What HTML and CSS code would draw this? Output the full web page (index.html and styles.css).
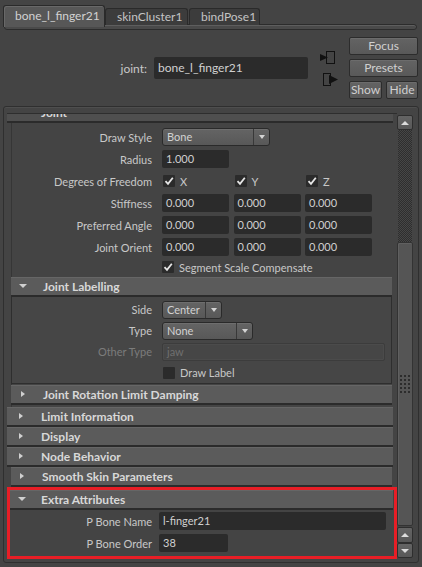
FILE: index.html
```html
<!DOCTYPE html>
<html>
<head>
<meta charset="utf-8">
<link rel="stylesheet" href="styles.css">
</head>
<body>
<div class="tabbar">
  <div class="tab active t1">bone_l_finger21</div>
  <div class="tab t2">skinCluster1</div>
  <div class="tab t3">bindPose1</div>
</div>
<div class="tabstrip"></div>

<div class="nodebar">
  <span class="nodelabel">joint:</span>
  <div class="nodefield">bone_l_finger21</div>
  <div class="conn">
    <svg width="19" height="35" viewBox="0 0 19 35">
      <rect x="7.5" y="0.5" width="8" height="12" fill="none" stroke="#111" stroke-width="1"/>
      <polygon points="1,3 9,6.5 1,10" fill="#111"/>
      <rect x="4.5" y="22.5" width="7" height="12" fill="none" stroke="#111" stroke-width="1"/>
      <polygon points="10,24 19,28.5 10,33" fill="#111"/>
    </svg>
  </div>
  <div class="btns">
    <div class="btn wide">Focus</div>
    <div class="btn wide">Presets</div>
    <div class="btn">Show</div>
    <div class="btn">Hide</div>
  </div>
</div>

<div class="scrollpanel">
  <div class="viewport">
    <div class="fhead top cut"><span class="ticon"><i class="tri down"></i></span><span class="t">Joint</span></div>
    <div class="fbody joint">
      <div class="row">
        <span class="lbl">Draw Style</span>
        <div class="ctl"><div class="dd w108"><span class="v">Bone</span><span class="a"></span></div></div>
      </div>
      <div class="row">
        <span class="lbl">Radius</span>
        <div class="ctl"><div class="fld w67">1.000</div></div>
      </div>
      <div class="row">
        <span class="lbl">Degrees of Freedom</span>
        <div class="ctl">
          <div class="cbg"><span class="cb on"><svg width="12" height="12" viewBox="0 0 12 12"><polyline points="2.5,6.2 5,8.8 9.8,2.8" fill="none" stroke="#e6e6e6" stroke-width="1.8"/></svg></span><span class="cbl">X</span></div>
          <div class="cbg"><span class="cb on"><svg width="12" height="12" viewBox="0 0 12 12"><polyline points="2.5,6.2 5,8.8 9.8,2.8" fill="none" stroke="#e6e6e6" stroke-width="1.8"/></svg></span><span class="cbl">Y</span></div>
          <div class="cbg"><span class="cb on"><svg width="12" height="12" viewBox="0 0 12 12"><polyline points="2.5,6.2 5,8.8 9.8,2.8" fill="none" stroke="#e6e6e6" stroke-width="1.8"/></svg></span><span class="cbl">Z</span></div>
        </div>
      </div>
      <div class="row">
        <span class="lbl">Stiffness</span>
        <div class="ctl tri3"><div class="fld w67">0.000</div><div class="fld w67">0.000</div><div class="fld w67">0.000</div></div>
      </div>
      <div class="row">
        <span class="lbl">Preferred Angle</span>
        <div class="ctl tri3"><div class="fld w67">0.000</div><div class="fld w67">0.000</div><div class="fld w67">0.000</div></div>
      </div>
      <div class="row">
        <span class="lbl">Joint Orient</span>
        <div class="ctl tri3"><div class="fld w67">0.000</div><div class="fld w67">0.000</div><div class="fld w67">0.000</div></div>
      </div>
      <div class="row short">
        <span class="lbl"></span>
        <div class="ctl"><span class="cb on"><svg width="12" height="12" viewBox="0 0 12 12"><polyline points="2.5,6.2 5,8.8 9.8,2.8" fill="none" stroke="#e6e6e6" stroke-width="1.8"/></svg></span><span class="cbl wide">Segment Scale Compensate</span></div>
      </div>

      <div class="fhead sub"><span class="ticon"><i class="tri down"></i></span><span class="t">Joint Labelling</span></div>
      <div class="fbody subbody">
        <div class="row r21">
          <span class="lbl">Side</span>
          <div class="ctl"><div class="dd w60"><span class="v">Center</span><span class="a"></span></div></div>
        </div>
        <div class="row r21">
          <span class="lbl">Type</span>
          <div class="ctl"><div class="dd w91"><span class="v">None</span><span class="a"></span></div></div>
        </div>
        <div class="row r21">
          <span class="lbl dis">Other Type</span>
          <div class="ctl"><div class="fld dis w223">jaw</div></div>
        </div>
        <div class="row r21">
          <span class="lbl"></span>
          <div class="ctl"><span class="cb off"></span><span class="cbl wide">Draw Label</span></div>
        </div>
      </div>

      <div class="fhead sub last"><span class="ticon"><i class="tri right"></i></span><span class="t">Joint Rotation Limit Damping</span></div>
    </div>

    <div class="fhead top"><span class="ticon"><i class="tri right"></i></span><span class="t">Limit Information</span></div>
    <div class="fhead top"><span class="ticon"><i class="tri right"></i></span><span class="t">Display</span></div>
    <div class="fhead top"><span class="ticon"><i class="tri right"></i></span><span class="t">Node Behavior</span></div>
    <div class="fhead sub skin"><span class="ticon"><i class="tri right"></i></span><span class="t">Smooth Skin Parameters</span></div>

    <div class="highlight">
      <div class="fhead extra"><span class="ticon"><i class="tri down"></i></span><span class="t">Extra Attributes</span></div>
      <div class="fbody extrabody">
        <div class="row">
          <span class="lbl">P Bone Name</span>
          <div class="ctl"><div class="fld w227">l-finger21</div></div>
        </div>
        <div class="row">
          <span class="lbl">P Bone Order</span>
          <div class="ctl"><div class="fld w69">38</div></div>
        </div>
      </div>
    </div>
  </div>

  <div class="sbar">
    <div class="sbtn up"></div>
    <div class="track"></div>
    <div class="thumb"><span class="grip"></span></div>
    <div class="sbtn up gap"></div>
    <div class="sbtn down"></div>
  </div>
</div>
</body>
</html>
```

FILE: styles.css
```css
* { box-sizing: border-box; }
html, body { margin: 0; padding: 0; }
body {
  width: 422px;
  height: 567px;
  overflow: hidden;
  background: #444444;
  font-family: Lato, "Open Sans", sans-serif;
  font-size: 11px;
  color: #c8c8c8;
}

/* tabs */
.tabbar {
  display: flex;
  align-items: flex-start;
  padding: 5px 0 0 3px;
  height: 29px;
  position: relative;
  z-index: 1;
}
.tab {
  height: 17px;
  margin-top: 3px;
  padding-left: 11px;
  background: #3c3c3c;
  border: 1px solid #2a2a2a;
  border-bottom: none;
  border-radius: 3px 3px 0 0;
  font-size: 12px;
  line-height: 15px;
  color: #c4c4c4;
  white-space: nowrap;
}
.tab.active {
  height: 22px;
  margin-top: 0;
  background: #575757;
  line-height: 19px;
  box-shadow: inset 1px 1px 0 #686868;
  color: #d2d2d2;
}
.t1 { width: 102px; }
.t2 { width: 83px; margin-left: 0; }
.t3 { width: 71px; margin-left: 1px; }
.tabstrip {
  margin: -5px 5px 0 4px;
  height: 6px;
  border: 1px solid #2c2c2c;
  border-radius: 3px;
  background: #4a4a4a;
  box-shadow: inset 0 1px 0 #5e5e5e;
}

/* node bar */
.nodebar {
  display: flex;
  align-items: center;
  height: 62px;
  margin-top: 7px;
}
.nodelabel {
  width: 147px;
  text-align: right;
  font-size: 12px;
  color: #c8c8c8;
}
.nodefield {
  margin-left: 7px;
  width: 154px;
  height: 22px;
  background: #2b2b2b;
  border-radius: 2px;
  padding-left: 4px;
  font-size: 12px;
  line-height: 22px;
  color: #d0d0d0;
}
.conn { margin-left: 11px; width: 19px; height: 35px; }
.conn svg { display: block; }
.btns {
  margin-left: 11px;
  display: grid;
  grid-template-columns: 33px 32px;
  gap: 4px;
}
.btn {
  height: 18px;
  background: linear-gradient(#636363, #595959);
  border: 1px solid #2c2c2c;
  border-radius: 2px;
  box-shadow: inset 0 1px 0 #6c6c6c;
  text-align: center;
  font-size: 12px;
  line-height: 15px;
  color: #d0d0d0;
}
.btn.wide { grid-column: span 2; }

/* scroll panel */
.scrollpanel {
  margin: 7px 3px 0 3px;
  height: 457px;
  border: 1px solid #2f2f2f;
  border-radius: 3px;
  display: flex;
  padding: 6px 5px 3px 3px;
  box-shadow: inset 0 1px 0 #4e4e4e;
}
.viewport {
  width: 390px;
  height: 446px;
  overflow: hidden;
  border-top: 1px solid #2e2e2e;
  flex: none;
}

/* frame headers */
.fhead {
  height: 20px;
  background: #5b5b5b;
  border-bottom: 2px solid #2b2b2b;
  box-shadow: inset 0 1px 0 #666;
  display: flex;
  align-items: center;
  padding-left: 8px;
  font-weight: bold;
  font-size: 12px;
  color: #d8d8d8;
  white-space: nowrap;
}
.fhead .ticon {
  width: 12px;
  display: flex;
  justify-content: center;
  align-items: center;
}
.fhead .t { margin-left: 14px; }
.fhead.top { margin-right: 4px; }
.fhead.cut { margin-top: -11px; background: #4f4f4f; }
.fhead.sub { padding-left: 6px; }
.fhead.skin { margin-left: 4px; margin-right: 5px; padding-left: 5px; }
.fhead.extra { margin-right: 1px; padding-left: 6px; }
.fhead.extra .t { margin-left: 13px; }

.tri { display: block; width: 0; height: 0; }
.tri.right {
  border-left: 4px solid #d0d0d0;
  border-top: 3.5px solid transparent;
  border-bottom: 3.5px solid transparent;
}
.tri.down {
  border-top: 4px solid #d0d0d0;
  border-left: 4.5px solid transparent;
  border-right: 4.5px solid transparent;
}

/* bodies */
.fbody.joint {
  margin: 0 5px 0 4px;
  padding: 3px 0 2px 0;
  box-shadow: inset 1px 0 0 #363636;
}
.fbody.subbody {
  border: 1px solid #2e2e2e;
  border-top: none;
  padding-top: 2px;
  margin-bottom: 1px;
  background: #464646;
}
.fbody.subbody .lbl { width: 140px; }
.fbody.extrabody { padding-bottom: 2px; }

.row {
  display: flex;
  align-items: center;
  height: 22px;
}
.row.short { height: 18px; margin-bottom: 1px; }
.row.r21 { height: 21px; }
.lbl {
  width: 141px;
  flex: none;
  text-align: right;
  color: #c8c8c8;
  white-space: nowrap;
}
.lbl.dis { color: #7c7c7c; }
.ctl {
  margin-left: 10px;
  display: flex;
  align-items: center;
}
.extrabody .lbl { width: 142px; }
.extrabody .ctl { margin-left: 7px; }

.tri3 { gap: 4.5px; }

.fld {
  height: 18px;
  background: #2b2b2b;
  border-radius: 2px;
  padding-left: 4px;
  line-height: 18px;
  color: #d0d0d0;
  white-space: nowrap;
}
.fld.dis {
  background: #464646;
  border: 1px solid #3c3c3c;
  box-shadow: inset 0 0 0 1px #4b4b4b;
  color: #707070;
  line-height: 16px;
}
.w67 { width: 67px; }
.w69 { width: 69px; }
.w223 { width: 223px; }
.w227 { width: 227px; }

.dd {
  height: 18px;
  border: 1px solid #2a2a2a;
  border-radius: 3px;
  background: linear-gradient(#646464, #585858);
  box-shadow: inset 0 1px 0 #6e6e6e;
  display: flex;
  color: #d2d2d2;
}
.dd .v { flex: 1; padding-left: 4px; line-height: 16px; }
.dd .a {
  width: 16px;
  border-left: 1px solid #383838;
  display: flex;
  align-items: center;
  justify-content: center;
}
.dd .a::after {
  content: "";
  border-top: 4px solid #d4d4d4;
  border-left: 3.5px solid transparent;
  border-right: 3.5px solid transparent;
}
.w108 { width: 108px; }
.w60 { width: 60px; }
.w91 { width: 91px; }

.cbg { width: 71.5px; display: flex; align-items: center; padding-left: 1px; }
.cb {
  width: 12px;
  height: 12px;
  background: #2b2b2b;
  border-radius: 1px;
  flex: none;
}
.cb svg { display: block; }
.cbl { margin-left: 5px; color: #c8c8c8; }
.subbody .ctl > .cb { margin-left: 1px; }

/* highlight annotation */
.highlight {
  border: 3px solid #e81e26;
  height: 72px;
}

/* scrollbar */
.sbar {
  width: 16px;
  margin-top: 2px;
  display: flex;
  flex-direction: column;
  flex: none;
}
.sbtn {
  height: 15px;
  flex: none;
  background: linear-gradient(#646464, #585858);
  border: 1px solid #2e2e2e;
  border-radius: 2px;
  display: flex;
  align-items: center;
  justify-content: center;
}
.sbtn.gap { margin-top: 1px; height: 16px; }
.sbtn.up::after {
  content: "";
  border-bottom: 4px solid #dcdcdc;
  border-left: 4px solid transparent;
  border-right: 4px solid transparent;
}
.sbtn.down::after {
  content: "";
  border-top: 4px solid #dcdcdc;
  border-left: 4px solid transparent;
  border-right: 4px solid transparent;
}
.track {
  height: 112px;
  flex: none;
  margin: 0 1px;
  background: repeating-conic-gradient(#2e2e2e 0 25%, #464646 0 50%) 0 0 / 2px 2px;
}
.thumb {
  height: 284px;
  flex: none;
  background: #555;
  border: 1px solid #333;
  border-radius: 2px;
  box-shadow: inset 1px 1px 0 #606060;
  display: flex;
  align-items: center;
  justify-content: center;
}
.grip {
  width: 12px;
  height: 20px;
  background: radial-gradient(circle, #2c2c2c 0.9px, transparent 1.2px) 0 0 / 4px 4px;
}
```
